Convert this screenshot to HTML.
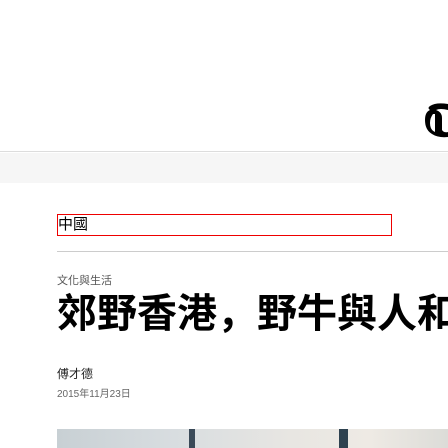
<!DOCTYPE html>
<html><head><meta charset="utf-8"><style>
*{margin:0;padding:0;box-sizing:border-box}
body{width:448px;height:448px;overflow:hidden;background:#fff;position:relative;font-family:"Liberation Sans","Noto Sans CJK SC",sans-serif}
.hdr{position:absolute;left:0;top:0;width:448px;height:152px;border-bottom:1px solid #ddd;background:#fff}
.logo{position:absolute;left:424px;top:100px}
.gray{position:absolute;left:0;top:153px;width:448px;height:30px;background:#f6f6f6}
.box{position:absolute;left:57px;top:214px;width:335px;height:22px;border:1px solid #e00;font-size:15px;line-height:20px;color:#000;font-family:"Liberation Sans","Noto Sans CJK TC",sans-serif}
.rule{position:absolute;left:57px;top:251px;width:391px;height:1px;background:#ccc}
.cat{position:absolute;left:57px;top:274px;font-size:11px;color:#555;line-height:14px;font-family:"Liberation Sans","Noto Sans CJK TC",sans-serif}
.h1{position:absolute;left:57px;top:290px;font-size:40px;font-weight:bold;line-height:48px;white-space:nowrap;color:#000}
.auth{position:absolute;left:57px;top:366px;font-size:12px;color:#222;line-height:16px;font-family:"Liberation Sans","Noto Sans CJK TC",sans-serif}
.date{position:absolute;left:57px;top:388px;font-size:10px;color:#666;line-height:14px}
.img{position:absolute;left:57px;top:429px;width:391px;height:19px;background:linear-gradient(90deg,#c8d0d4 0%,#d8dde0 30%,#e8e6e2 60%,#eeeae4 80%,#dcdcd8 100%)}
.p1{position:absolute;left:189px;top:429px;width:6px;height:19px;background:#3a4a58}
.p2{position:absolute;left:339px;top:429px;width:9px;height:19px;background:#2e4250}
</style></head><body>
<div class="hdr"><svg class="logo" width="24" height="38" viewBox="0 0 24 38"><path d="M6 6 Q12 2 24 4 L24 10 Q16 8 12 10 Q18 12 18 18 L18 30 Q20 33 24 32 L24 37 Q14 38 8 34 Q1 30 1 20 Q1 12 6 10 Q3 8 6 6 Z M9 14 Q6 18 6 23 Q6 30 11 32 L11 14 Z" fill="#000"/></svg></div>
<div class="gray"></div>
<div class="box">中國</div>
<div class="rule"></div>
<div class="cat">文化與生活</div>
<div class="h1">郊野香港，野牛與人和</div>
<div class="auth">傅才德</div>
<div class="date">2015年11月23日</div>
<div class="img"></div><div class="p1"></div><div class="p2"></div>
</body></html>
